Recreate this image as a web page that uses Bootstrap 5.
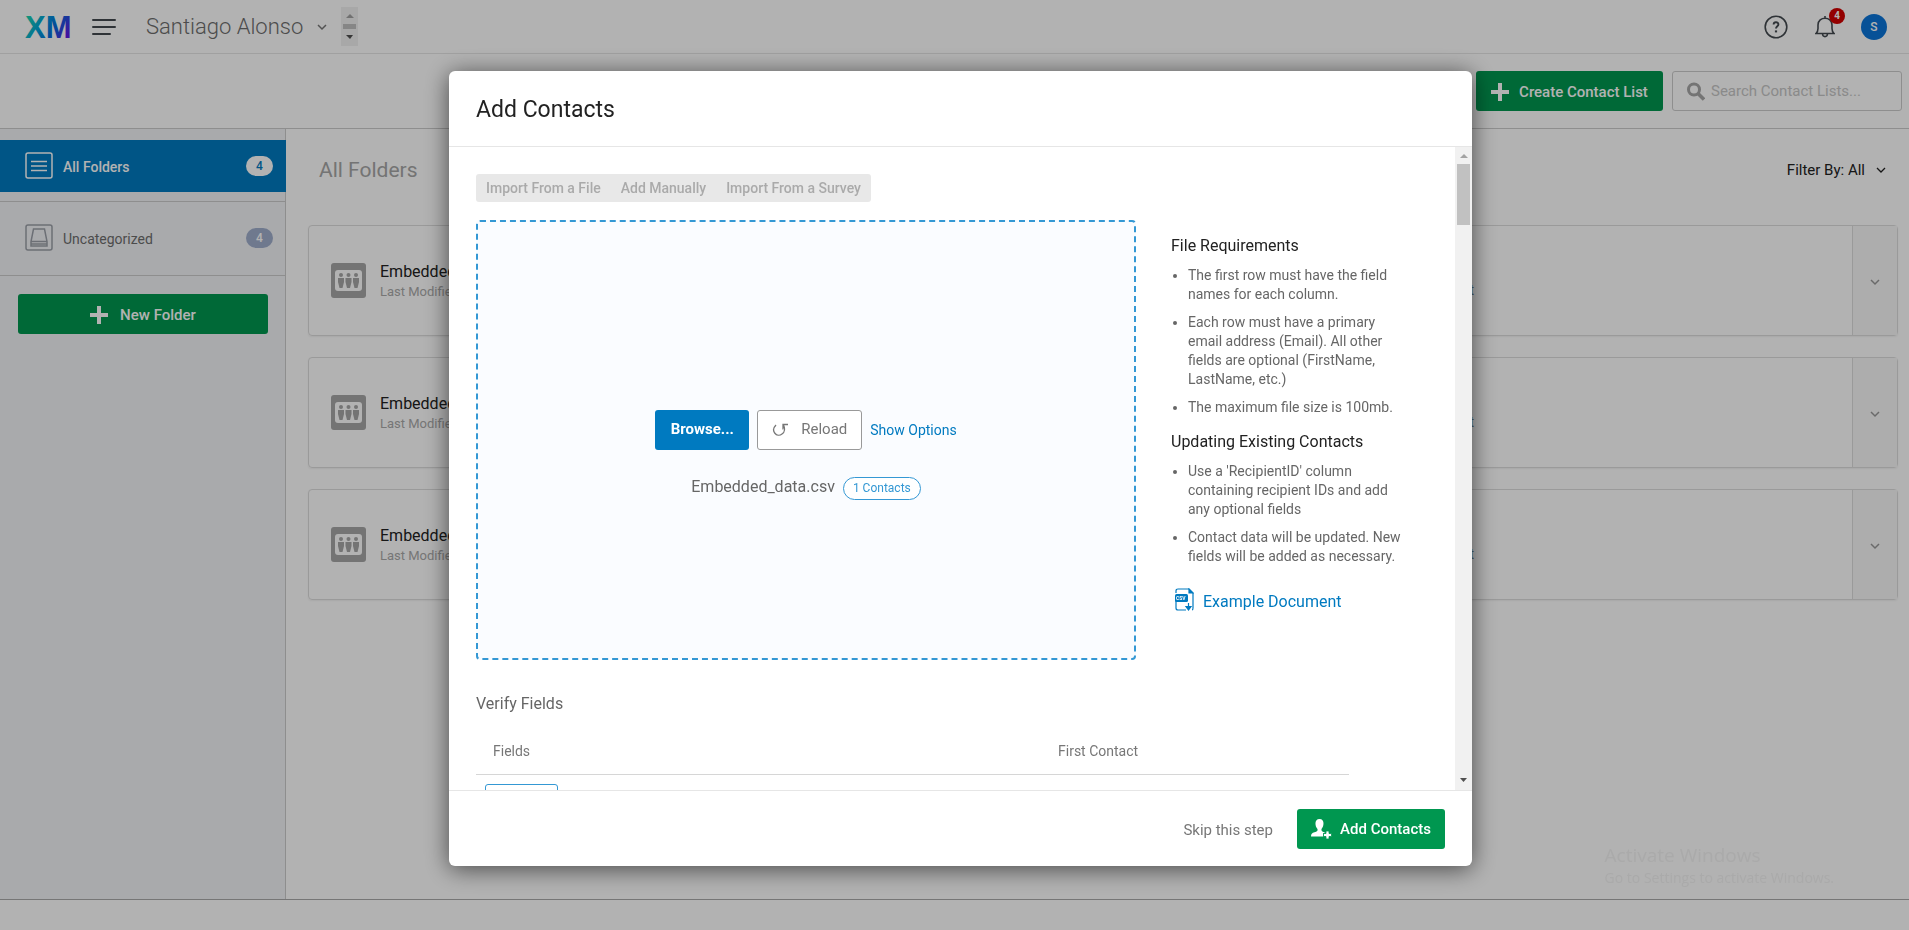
<!DOCTYPE html>
<html lang="en">
<head>
<meta charset="utf-8">
<meta name="viewport" content="width=device-width, initial-scale=1">
<title>Contacts</title>
<link rel="stylesheet" href="https://cdn.jsdelivr.net/npm/bootstrap@5.3.0/dist/css/bootstrap.min.css">
<style>
  body { font-family: Roboto, "Liberation Sans", sans-serif; font-size: 14px; line-height: 20px; color: #222; height: 100vh; overflow: hidden; }
  button, input { font-family: inherit; }
  .blue-link { color: #007ac0; text-decoration: none; }
  .btn { border-radius: 3px; }

  /* page behind the dialog */
  .site-head { height: 54px; border-bottom: 1px solid #e6e6e6; padding: 0 22px 0 25px; }
  .icon-btn { border: 0; background: none; padding: 0; line-height: 0; }
  .menu-btn { margin: 0 30px 0 26px; }
  .bell-btn { margin: 0 26px 0 27px; }
  .brand-name { font-size: 22px; font-weight: 300; line-height: 28px; color: #6e6e6e; margin-right: 12px; }
  .mini-scroll { width: 17px; height: 39px; background: #f1f1f1; padding: 5px 2px; margin-left: 12px; }
  .mini-thumb { width: 13px; height: 5px; background: #c1c1c1; }
  .notif-count { width: 16px; height: 16px; top: -7px; right: -10px; background: #d30000; color: #fff; font-size: 10px; font-weight: 700; line-height: 16px; }
  .avatar { width: 26px; height: 26px; background: #0b75d9; color: #fff; font-size: 12px; font-weight: 500; line-height: 26px; }
  .tool-row { height: 75px; border-bottom: 1px solid #ccc; padding: 17px 7px 17px 0; gap: 9px; }
  .btn-green, .btn-green:hover { background: #009750; color: #fff; border: 0; height: 40px; font-size: 15px; font-weight: 500; padding: 2px 0 0; }
  .btn-create { width: 187px; gap: 10px; }
  .search-box { width: 230px; height: 40px; border: 1px solid #ccc; border-radius: 3px; padding: 0 14px; gap: 4px; }
  .search-box input { border: 0; outline: 0; background: none; min-width: 0; flex: 1; font-size: 15px; }
  .search-box input::placeholder { color: #c6c6c6; opacity: 1; }

  .side { width: 286px; background: #f3f4f7; border-right: 1px solid #ccc; padding-top: 11px; }
  .folder { display: flex; align-items: center; height: 52px; padding: 0 12px 0 25px; gap: 10px; color: #6e6e6e; text-decoration: none; }
  .folder-name { padding-top: 2px; flex: 1; }
  .folder.on { background: #007ac0; color: #fff; font-weight: 500; margin: 0 -1px 9px 0; padding-right: 13px; }
  .folder-block { border: 1px solid #ccc; border-width: 1px 0; padding: 10px 0; height: 75px; }
  .pill { width: 27px; height: 20px; border-radius: 10px; line-height: 20px; font-size: 12px; text-align: center; background: #fff; color: #007ac0; }
  .pill-dim { background: #9faecc; color: #fff; font-weight: 500; }
  .btn-new { width: 250px; margin: 18px 0 0 18px; gap: 12px; }

  .main-pane { padding: 0 11px 0 22px; }
  .pane-head { height: 96px; padding: 8px 12px 22px 11px; }
  .pane-title { font-size: 21px; font-weight: 400; line-height: 28px; color: #a6a6a6; margin: 0; }
  .filter-btn { border: 0; background: none; padding: 0; font-size: 15px; color: #222; gap: 11px; }
  .list-card { height: 111px; border: 1px solid #ddd; border-radius: 4px; margin-bottom: 21px; padding-left: 22px; box-shadow: 0 1px 2px rgba(0,0,0,.06); }
  .list-text { padding: 3px 0 0 14px; }
  .list-name { font-size: 16px; line-height: 20px; color: #222; }
  .list-date { font-size: 13px; line-height: 20px; color: #aaa; }
  .list-count { color: #6b8290; padding: 18px 378px 0 0; }
  .card-menu { width: 45px; background: #f8f8f8; border: 0; border-left: 1px solid #ddd; }
  .site-foot { height: 31px; border-top: 1px solid #aaa; }

  /* dialog */
  .shade { position: fixed; inset: 0; background: rgba(0,0,0,.3); display: flex; justify-content: center; padding: 71px 0 64px 12px; }
  .dialog { width: 1023px; max-width: 95vw; background: #fff; border-radius: 6px; box-shadow: 0 3px 24px rgba(0,0,0,.6); }
  .dialog-head { height: 76px; border-bottom: 1px solid #e6e6e6; padding: 2px 27px 0; }
  .dialog-head h1 { font-size: 23px; line-height: 28px; font-weight: 400; margin: 0; color: #222; }
  .dialog-main { min-height: 0; }
  .dialog-scroll { padding: 27px 32px 0 27px; overflow: hidden; min-width: 0; }
  .scroll-rail { width: 17px; background: #f1f1f1; padding: 6px 2px; }
  .scroll-thumb { width: 13px; height: 61px; background: #c1c1c1; margin-top: 5px; }
  .seg { background: #e8e8e8; border-radius: 3px; height: 28px; padding: 0 10px; gap: 20px; }
  .seg button { border: 0; background: none; padding: 0; color: #aaa; font-size: 14px; font-weight: 500; }
  .upload-row { margin-top: 18px; gap: 35px; }
  .drop { width: 660px; height: 440px; border: 2px dashed #3498d4; border-radius: 4px; background: #fafcff; gap: 25px; padding-top: 29px; }
  .btn-blue, .btn-blue:hover { width: 94px; height: 40px; background: #007ac0; color: #fff; font-size: 15px; font-weight: 700; border: 0; padding: 0; }
  .btn-plain, .btn-plain:hover { width: 105px; height: 40px; background: #fff; color: #777; border: 1px solid #999; font-size: 15px; padding: 0; gap: 12px; }
  .file-name { font-size: 16px; color: #666; }
  .count-tag { font-size: 12px; line-height: 21px; color: #3498d4; border: 1px solid #3498d4; border-radius: 12px; padding: 0 9px; background: #fff; margin-top: 2px; }
  .notes { padding-top: 15px; width: 240px; }
  .notes h2 { font-size: 16px; line-height: 22px; font-weight: 400; margin: 0 0 9px; color: #222; }
  .notes ul { padding-left: 17px; margin: 0 0 14px; color: #666; }
  .notes li { line-height: 19px; margin-bottom: 9px; }
  .doc-link { font-size: 16px; gap: 9px; padding: 8px 4px; align-items: flex-end; }
  .verify-title { font-size: 16px; line-height: 22px; font-weight: 400; color: #666; margin: 33px 0 24px; }
  .fields { width: 873px; color: #777; table-layout: fixed; }
  .fields th { font-weight: 400; padding: 2px 0 13px 17px; border-bottom: 1px solid #d6d6d6; }
  .fields th:first-child { width: 565px; }
  .fields td { padding: 9px; }
  .field-btn { width: 73px; height: 30px; border: 1px solid #3498d4; border-radius: 3px; background: #fff; color: #3498d4; }
  .dialog-foot { height: 76px; border-top: 1px solid #e6e6e6; padding: 0 27px; gap: 24px; }
  .btn-skip { border: 0; background: none; padding: 2px 0 0; color: #777; font-size: 15px; }
  .btn-add { width: 148px; gap: 8px; }
  .os-note { position: fixed; right: 75px; bottom: 42px; color: #aaa; font-family: "Open Sans", sans-serif; font-size: 14px; line-height: 20px; pointer-events: none; }
  .os-note b { display: block; font-size: 19px; font-weight: 400; line-height: 26px; }
</style>
</head>
<body class="d-flex flex-column">

<header class="site-head d-flex align-items-center flex-shrink-0">
  <svg width="41" height="30" viewBox="0 0 41 30" overflow="visible" role="img" aria-label="XM">
    <defs>
      <linearGradient id="xmfill" x1="0" y1="4" x2="41" y2="26" gradientUnits="userSpaceOnUse">
        <stop offset="0" stop-color="#21dba9"/><stop offset=".4" stop-color="#00a0d8"/><stop offset=".7" stop-color="#0768dd"/><stop offset="1" stop-color="#5f1ae5"/>
      </linearGradient>
    </defs>
    <text x="0" y="26" font-family="Liberation Sans Narrow, Liberation Sans" font-weight="700" font-size="31" fill="url(#xmfill)">XM</text>
  </svg>
  <button class="icon-btn menu-btn" aria-label="Menu">
    <svg width="24" height="18" stroke="#444a50" stroke-width="2" stroke-linecap="round"><path d="M1 2h22M1 9h22M1 16h17"/></svg>
  </button>
  <span class="brand-name">Santiago Alonso</span>
  <svg width="14" height="10" fill="none" stroke="#777" stroke-width="1.5"><path d="M3 3l4 4 4-4"/></svg>
  <div class="mini-scroll d-flex flex-column align-items-center justify-content-between">
    <svg width="9" height="8"><path d="M1 6l4-4 4 4z" fill="#a3a3a3"/></svg>
    <div class="mini-thumb"></div>
    <svg width="9" height="8"><path d="M1 2h7l-3 4z" fill="#505050"/></svg>
  </div>
  <div class="d-flex align-items-center ms-auto">
    <button class="icon-btn" aria-label="Help">
      <svg width="24" height="24" fill="none" stroke="#444a50" stroke-width="1.6"><circle cx="12" cy="12" r="10.8"/><path d="M9.6 9.600c0-3.200 4.800-3.100 4.800-.2 0 1.800-2.400 1.900-2.400 4.200" stroke-width="1.900"/><path d="M12 15.400v2" stroke-width="2.200"/></svg>
    </button>
    <button class="icon-btn bell-btn position-relative" aria-label="Notifications">
      <svg width="20" height="24" fill="none" stroke="#444a50" stroke-width="1.6"><path d="M10 1v2M1 18.500c1.500-1.500 2-3 2-5V10c0-9 14-9 14 0v3.500c0 2 .5 3.500 2 5zM7.500 19c.5 3.500 4.500 3.500 5 0"/></svg>
      <span class="notif-count position-absolute rounded-circle">4</span>
    </button>
    <button class="icon-btn avatar rounded-circle">S</button>
  </div>
</header>

<div class="tool-row d-flex justify-content-end flex-shrink-0">
  <button class="btn btn-green btn-create d-flex align-items-center justify-content-center">
    <svg width="18" height="18" fill="#fff"><path d="M7 0h4v7h7v4h-7v7H7v-7H0V7h7z"/></svg>Create Contact List
  </button>
  <label class="search-box d-flex align-items-center">
    <svg width="18" height="19" fill="none" stroke="#a6a6a6"><circle cx="7" cy="7.500" r="5.500" stroke-width="3"/><path d="M11 11.500l6 6" stroke-width="3.500"/></svg>
    <input type="text" placeholder="Search Contact Lists..." aria-label="Search Contact Lists">
  </label>
</div>

<div class="d-flex flex-grow-1">
  <nav class="side flex-shrink-0">
    <a href="#" class="folder on">
      <svg width="28" height="28" fill="none" stroke="#fff" stroke-width="1.500"><rect x="1" y="1" width="26" height="25" rx="2"/><path d="M6 9.500h16M6 14h16M6 18.500h16"/></svg>
      <span class="folder-name">All Folders</span><span class="pill">4</span>
    </a>
    <div class="folder-block">
      <a href="#" class="folder">
        <svg width="28" height="28" fill="none" stroke="#9ba0a8" stroke-width="1.500"><rect x="1" y="1" width="26" height="25" rx="2"/><path d="M8.500 5h11L22 17.500V22H6v-4.500zM6 17.500h16M6 20h16"/></svg>
        <span class="folder-name">Uncategorized</span><span class="pill pill-dim">4</span>
      </a>
    </div>
    <button class="btn btn-green btn-new d-flex align-items-center justify-content-center">
      <svg width="18" height="18" fill="#fff"><path d="M7 0h4v7h7v4h-7v7H7v-7H0V7h7z"/></svg>New Folder
    </button>
  </nav>

  <main class="main-pane flex-grow-1">
    <div class="pane-head d-flex align-items-center justify-content-between">
      <h2 class="pane-title">All Folders</h2>
      <button class="filter-btn d-flex align-items-center">Filter By: All
        <svg width="10" height="8" fill="none" stroke="#222" stroke-width="1.300"><path d="M1 2l4 4 4-4"/></svg></button>
    </div>
    <svg width="0" height="0" class="position-absolute" aria-hidden="true">
      <symbol id="people" viewBox="0 0 35 35">
        <rect width="35" height="35" rx="3" fill="#a6a6a6"/><rect x="4" y="7" width="27" height="21" rx="3" fill="#fff"/>
        <g fill="#a6a6a6"><circle cx="10" cy="12" r="2"/><path d="M7 15h6v4l-1.500 6h-3L7 19z"/><circle cx="17.500" cy="12" r="2"/><path d="M14.500 15h6v4L19 25h-3l-1.500-6z"/><circle cx="25" cy="12" r="2"/><path d="M22 15h6v4l-1.500 6h-3L22 19z"/></g>
      </symbol>
    </svg>
    <div class="list-card d-flex">
      <div class="d-flex align-items-center"><svg width="35" height="35"><use href="#people"/></svg></div>
      <div class="list-text d-flex align-items-center"><div><div class="list-name">Embedded</div><div class="list-date">Last Modified</div></div></div>
      <div class="list-count d-flex align-items-center ms-auto">Contact</div>
      <button class="card-menu" aria-label="List actions"><svg width="10" height="8" fill="none" stroke="#999" stroke-width="1.500"><path d="M1 2l4 4 4-4"/></svg></button>
    </div>
    <div class="list-card d-flex">
      <div class="d-flex align-items-center"><svg width="35" height="35"><use href="#people"/></svg></div>
      <div class="list-text d-flex align-items-center"><div><div class="list-name">Embedded</div><div class="list-date">Last Modified</div></div></div>
      <div class="list-count d-flex align-items-center ms-auto">Contact</div>
      <button class="card-menu" aria-label="List actions"><svg width="10" height="8" fill="none" stroke="#999" stroke-width="1.500"><path d="M1 2l4 4 4-4"/></svg></button>
    </div>
    <div class="list-card d-flex">
      <div class="d-flex align-items-center"><svg width="35" height="35"><use href="#people"/></svg></div>
      <div class="list-text d-flex align-items-center"><div><div class="list-name">Embedded</div><div class="list-date">Last Modified</div></div></div>
      <div class="list-count d-flex align-items-center ms-auto">Contact</div>
      <button class="card-menu" aria-label="List actions"><svg width="10" height="8" fill="none" stroke="#999" stroke-width="1.500"><path d="M1 2l4 4 4-4"/></svg></button>
    </div>
  </main>
</div>
<footer class="site-foot flex-shrink-0"></footer>

<div class="shade">
  <section class="dialog d-flex flex-column" role="dialog" aria-labelledby="dlg">
    <div class="dialog-head d-flex align-items-center flex-shrink-0"><h1 id="dlg">Add Contacts</h1></div>
    <div class="dialog-main d-flex flex-grow-1">
      <div class="dialog-scroll flex-grow-1">
        <div class="seg d-inline-flex align-items-center">
          <button>Import From a File</button><button>Add Manually</button><button>Import From a Survey</button>
        </div>
        <div class="upload-row d-flex">
          <div class="drop d-flex flex-column align-items-center justify-content-center flex-shrink-0">
            <div class="d-flex align-items-center gap-2">
              <button class="btn btn-blue">Browse...</button>
              <button class="btn btn-plain d-flex align-items-center justify-content-center">
                <svg width="17" height="14" fill="none" stroke="#777" stroke-width="1.300"><path d="M4 2c-6 6 1 13 6 9 3-2 3-6 1.500-9M16 1.500h-5v5"/></svg>Reload</button>
              <a href="#" class="blue-link">Show Options</a>
            </div>
            <div class="d-flex align-items-center gap-2"><span class="file-name">Embedded_data.csv</span><span class="count-tag">1 Contacts</span></div>
          </div>
          <div class="notes">
            <h2>File Requirements</h2>
            <ul>
              <li>The first row must have the field names for each column.</li>
              <li>Each row must have a primary email address (Email). All other fields are optional (FirstName, LastName, etc.)</li>
              <li>The maximum file size is 100mb.</li>
            </ul>
            <h2>Updating Existing Contacts</h2>
            <ul>
              <li>Use a 'RecipientID' column containing recipient IDs and add any optional fields</li>
              <li>Contact data will be updated. New fields will be added as necessary.</li>
            </ul>
            <a href="#" class="blue-link doc-link d-flex">
              <svg width="19" height="24" fill="none" stroke="#007ac0" stroke-width="1.200"><path d="M1 5V3q0-2 2-2h11l4 4v15q0 2-1 2M1 13v7q0 2 2 2h8"/><path d="M14 1v4h4z" fill="#007ac0"/><rect x="0" y="6" width="13" height="8" rx="1.500" fill="#007ac0" stroke="none"/><text x="1" y="12" font-size="5" font-weight="700" fill="#fff" stroke="none">CSV</text><path d="M13.500 15v4M11 18.500h5l-2.500 3.500z" fill="#007ac0"/></svg>Example Document</a>
          </div>
        </div>
        <h2 class="verify-title">Verify Fields</h2>
        <table class="fields">
          <thead><tr><th>Fields</th><th>First Contact</th></tr></thead>
          <tbody><tr><td><button class="field-btn" aria-label="Field"></button></td><td></td></tr></tbody>
        </table>
      </div>
      <div class="scroll-rail d-flex flex-column align-items-center flex-shrink-0">
        <svg width="9" height="6"><path d="M1 5l4-4 4 4z" fill="#a3a3a3"/></svg>
        <div class="scroll-thumb"></div>
        <svg class="mt-auto" width="9" height="6"><path d="M1 0h7L4.500 4z" fill="#505050"/></svg>
      </div>
    </div>
    <div class="dialog-foot d-flex align-items-center justify-content-end flex-shrink-0">
      <button class="btn-skip">Skip this step</button>
      <button class="btn btn-green btn-add d-flex align-items-center justify-content-center">
        <svg width="21" height="21" fill="#fff"><path d="M8.500 0C3 0 4 7.500 6.500 10c.5 2-.5 2.500-3 3.300C1 14 0 15 0 17.500h12V14h3c-2-1-5-1-4.500-4C13 7.500 14 0 8.500 0z"/><path d="M15 12h3v2.500h2.500v3H18V20h-3v-2.500h-2.500v-3H15z" stroke="#009750" stroke-width=".8"/></svg>Add Contacts</button>
    </div>
  </section>
</div>

<div class="os-note"><b>Activate Windows</b>Go to Settings to activate Windows.</div>
<script src="https://cdn.jsdelivr.net/npm/bootstrap@5.3.0/dist/js/bootstrap.bundle.min.js"></script>
</body>
</html>
